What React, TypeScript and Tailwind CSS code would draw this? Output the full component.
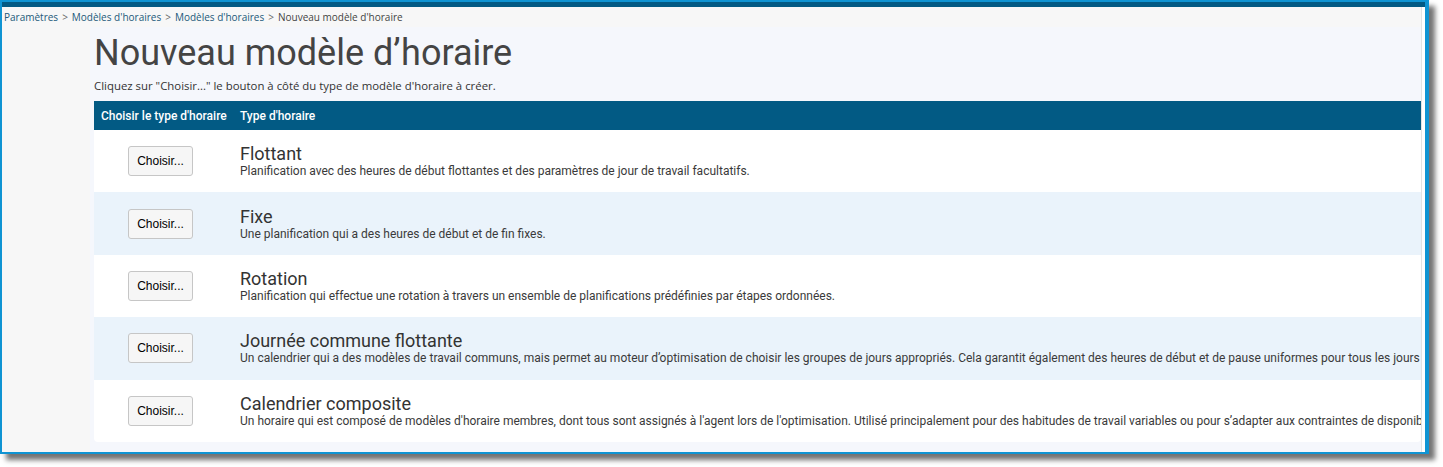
import React from "react";

type ScheduleType = {
  name: string;
  description: string;
};

const crumbs = ["Paramètres", "Modèles d'horaires", "Modèles d'horaires"];

const scheduleTypes: ScheduleType[] = [
  {
    name: "Flottant",
    description:
      "Planification avec des heures de début flottantes et des paramètres de jour de travail facultatifs.",
  },
  {
    name: "Fixe",
    description: "Une planification qui a des heures de début et de fin fixes.",
  },
  {
    name: "Rotation",
    description:
      "Planification qui effectue une rotation à travers un ensemble de planifications prédéfinies par étapes ordonnées.",
  },
  {
    name: "Journée commune flottante",
    description:
      "Un calendrier qui a des modèles de travail communs, mais permet au moteur d’optimisation de choisir les groupes de jours appropriés. Cela garantit également des heures de début et de pause uniformes pour tous les jours planifiés.",
  },
  {
    name: "Calendrier composite",
    description:
      "Un horaire qui est composé de modèles d'horaire membres, dont tous sont assignés à l'agent lors de l'optimisation. Utilisé principalement pour des habitudes de travail variables ou pour s’adapter aux contraintes de disponibilité.",
  },
];

const uiFont = { fontFamily: '"Open Sans", "Noto Sans", sans-serif' };
const roboto = { fontFamily: "Roboto, sans-serif" };

export default function App() {
  return (
    <div className="h-[467px] w-[1443px] overflow-hidden bg-white">
      <div className="flex h-[454px] w-[1429px] flex-col overflow-hidden border-2 border-r-[4px] border-[#0f94d3] bg-[#f7f7f7] shadow-[6px_6px_5px_rgba(0,0,0,0.55)]">
        <div className="h-[5px] shrink-0 bg-[#035a84]" />

        <div className="flex min-h-0 flex-1">
          <div className="flex min-w-0 flex-1 flex-col">
            {/* breadcrumb */}
            <nav
              className="flex h-[20px] shrink-0 items-center gap-[4px] whitespace-nowrap px-[2px] text-[10px] leading-none"
              style={uiFont}
            >
              {crumbs.map((c, i) => (
                <React.Fragment key={i}>
                  <span className="text-[#23597a]">{c}</span>
                  <span className="text-[#666]">&gt;</span>
                </React.Fragment>
              ))}
              <span className="text-[#444]">Nouveau modèle d'horaire</span>
            </nav>

            <div className="flex min-h-0 flex-1 pl-[88px]">
              <div className="flex min-w-0 flex-1 flex-col overflow-hidden bg-[#f5f7fc] pl-[4px] pt-[5px]">
                <h1
                  className="whitespace-nowrap text-[36px] font-normal leading-[42px] text-[#444]"
                  style={roboto}
                >
                  Nouveau modèle d’horaire
                </h1>
                <p
                  className="mt-[4px] whitespace-nowrap text-[11.4px] leading-[15px] text-[#333]"
                  style={uiFont}
                >
                  Cliquez sur "Choisir..." le bouton à côté du type de modèle d'horaire à créer.
                </p>

                <div className="mt-[8px] overflow-hidden rounded-b-[4px]">
                  <div
                    className="flex h-[29px] items-center whitespace-nowrap bg-[#025a84] text-[12px] font-medium text-white"
                    style={roboto}
                  >
                    <div className="w-[139px] shrink-0 pl-[7px]">Choisir le type d'horaire</div>
                    <div className="pl-[7px]">Type d'horaire</div>
                  </div>

                  {scheduleTypes.map((t, i) => (
                    <div
                      key={t.name}
                      className={
                        "flex h-[62.4px] items-center whitespace-nowrap " +
                        (i % 2 === 1 ? "bg-[#eaf3fb]" : "bg-white")
                      }
                    >
                      <div className="w-[139px] shrink-0 pl-[34px]">
                        <button
                          type="button"
                          className="h-[30px] w-[65px] rounded-[3px] border border-[#c6c6c6] bg-[#f6f6f6] text-[12px] text-black"
                          style={{ fontFamily: '"Liberation Sans", Arial, sans-serif' }}
                        >
                          Choisir...
                        </button>
                      </div>
                      <div className="min-w-0 pl-[7px] text-[#333]" style={roboto}>
                        <div className="text-[18px] leading-[20px]">{t.name}</div>
                        <div className="text-[12px] leading-[14px] text-[#3a3a3a]">{t.description}</div>
                      </div>
                    </div>
                  ))}
                </div>
              </div>
            </div>
          </div>

          {/* scrollbar track */}
          <div className="w-[4px] shrink-0 border-l border-[#e2e2e2] bg-white" />
        </div>
      </div>
    </div>
  );
}
